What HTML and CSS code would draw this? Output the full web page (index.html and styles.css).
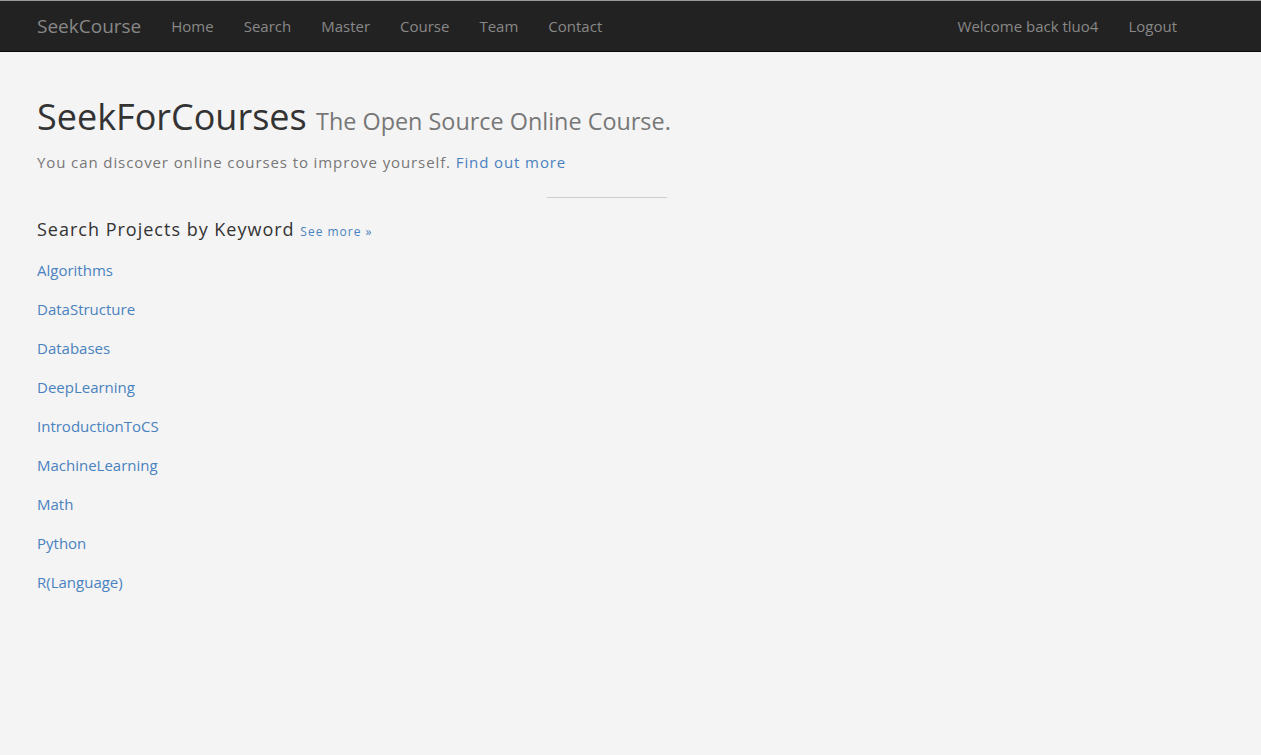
FILE: index.html
```html
<!DOCTYPE html>
<html>
<head>
<meta charset="utf-8">
<title>SeekCourse</title>
<link rel="stylesheet" href="styles.css">
</head>
<body>
<nav class="navbar">
  <div class="nav-inner">
    <a class="brand" href="#">SeekCourse</a>
    <ul class="nav">
      <li><a href="#">Home</a></li>
      <li><a href="#">Search</a></li>
      <li><a href="#">Master</a></li>
      <li><a href="#">Course</a></li>
      <li><a href="#">Team</a></li>
      <li><a href="#">Contact</a></li>
    </ul>
    <ul class="nav nav-right">
      <li><a href="#">Welcome back tluo4</a></li>
      <li><a href="#">Logout</a></li>
    </ul>
  </div>
</nav>
<main class="container">
  <h1 class="title">SeekForCourses <small>The Open Source Online Course.</small></h1>
  <p class="lead">You can discover online courses to improve yourself. <a href="#">Find out more</a></p>
  <hr class="divider">
  <h3 class="section">Search Projects by Keyword <a class="more" href="#">See more »</a></h3>
  <ul class="keywords">
    <li><a href="#">Algorithms</a></li>
    <li><a href="#">DataStructure</a></li>
    <li><a href="#">Databases</a></li>
    <li><a href="#">DeepLearning</a></li>
    <li><a href="#">IntroductionToCS</a></li>
    <li><a href="#">MachineLearning</a></li>
    <li><a href="#">Math</a></li>
    <li><a href="#">Python</a></li>
    <li><a href="#">R(Language)</a></li>
  </ul>
</main>
</body>
</html>
```
FILE: styles.css
```css
* { box-sizing: border-box; }
html, body { margin: 0; padding: 0; }
body {
  background: #f4f4f4;
  font-family: "Open Sans", "Liberation Sans", sans-serif;
  color: #333;
  font-size: 15px;
}
a { text-decoration: none; color: #4a82bf; }

.navbar {
  background: #222;
  border-top: 1px solid #9a9a9a;
  border-bottom: 1px solid #080808;
  height: 52px;
}
.nav-inner {
  display: flex;
  align-items: center;
  height: 50px;
  padding: 0 69px 0 22px;
}
.brand {
  color: #888;
  font-size: 19px;
  padding: 0 15px;
  line-height: 50px;
}
.nav {
  list-style: none;
  margin: 0;
  padding: 0;
  display: flex;
}
.nav a {
  display: block;
  color: #888;
  font-size: 15px;
  padding: 0 15px;
  line-height: 50px;
}
.nav-right { margin-left: auto; }

.container {
  padding: 0 84px 0 37px;
}
.title {
  font-weight: 400;
  font-size: 36px;
  color: #333;
  margin: 41px 0 0;
  line-height: 48px;
}
.title small {
  font-size: 23.4px;
  color: #777;
}
.lead {
  margin: 5px 0 0;
  font-size: 15px;
  letter-spacing: 0.9px;
  color: #777;
  line-height: 24px;
}
.lead a { color: #4a82bf; }
.divider {
  width: 120px;
  margin: 23px auto 0;
  border: 0;
  border-top: 1px solid #cdcdcd;
  height: 0;
}
.section {
  font-weight: 400;
  font-size: 18px;
  letter-spacing: 1px;
  color: #333;
  margin: 17px 0 0;
  line-height: 28px;
}
.more {
  font-size: 12px;
  letter-spacing: 1px;
  color: #4a82bf;
}
.keywords {
  list-style: none;
  margin: 14px 0 0;
  padding: 0;
}
.keywords li {
  line-height: 20px;
  margin-bottom: 19px;
}
.keywords a { font-size: 15px; color: #4a82bf; }
```
